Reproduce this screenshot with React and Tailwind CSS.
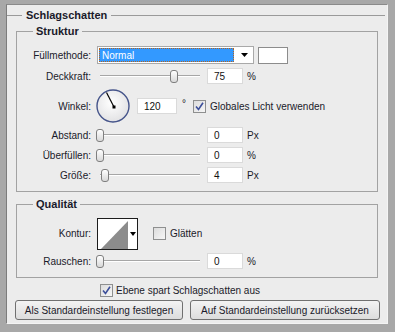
import React from 'react'

const font = "font-['Liberation_Sans','DejaVu_Sans',Arial,sans-serif]"

function Checkbox({ checked }) {
  return (
    <div className="flex h-[13px] w-[13px] items-center justify-center border border-[#8e8f8f] bg-gradient-to-br from-[#dcdcdc] to-[#f6f6f6]">
      {checked && (
        <svg width="9" height="9" viewBox="0 0 9 9">
          <path d="M1 4.5 L3.5 7.5 L8 0.8" fill="none" stroke="#3c4f9a" strokeWidth="1.6" />
        </svg>
      )}
    </div>
  )
}

function Slider({ thumb }) {
  return (
    <div className="relative flex h-[16px] w-[106px] items-center px-[3px]">
      <div className="h-[2px] w-full border-t border-b border-t-[#a6a6a6] border-b-white" />
      <div
        className="absolute top-[2px] h-[13px] w-[8px] rounded-[3px] border border-[#7f7f7f] bg-gradient-to-b from-white to-[#d8d8d8]"
        style={{ left: thumb - 4 }}
      />
    </div>
  )
}

function NumInput({ value, w = 'w-[36px]' }) {
  return (
    <div className={`${w} flex h-[16px] items-center border border-[#dadada] bg-white pl-[6px] text-[#111]`}>
      {value}
    </div>
  )
}

function Label({ children }) {
  return <div className="w-[75px] shrink-0 pr-[1px] text-right">{children}</div>
}

function SliderRow({ label, thumb, value, unit }) {
  return (
    <div className="flex h-[20px] items-center">
      <Label>{label}</Label>
      <div className="ml-[5px]">
        <Slider thumb={thumb} />
      </div>
      <div className="ml-[4px]">
        <NumInput value={value} />
      </div>
      <span className="ml-[4px]">{unit}</span>
    </div>
  )
}

function Dial() {
  return (
    <svg width="34" height="34" viewBox="0 0 34 34">
      <defs>
        <radialGradient id="dialFill" cx="45%" cy="40%" r="60%">
          <stop offset="0%" stopColor="#ffffff" />
          <stop offset="100%" stopColor="#e2e2e4" />
        </radialGradient>
      </defs>
      <circle cx="17" cy="17" r="16" fill="url(#dialFill)" stroke="#45548a" strokeWidth="1.4" />
      <line x1="18" y1="18" x2="10.5" y2="3.5" stroke="#000" strokeWidth="1.2" />
      <rect x="16.5" y="16.5" width="3" height="3" fill="#000" />
    </svg>
  )
}

function ContourPicker() {
  return (
    <div className="flex h-[32px] w-[41px] border border-[#1c1c1c] bg-white">
      <svg width="30" height="30" viewBox="0 0 30 30">
        <polygon points="3,30 30,2 30,30" fill="#8c8c8c" />
      </svg>
      <div className="flex flex-1 items-center justify-center">
        <svg width="6" height="4" viewBox="0 0 6 4">
          <polygon points="0,0 6,0 3,4" fill="#000" />
        </svg>
      </div>
    </div>
  )
}

export default function App() {
  return (
    <div className={`${font} h-[332px] w-[395px] bg-[#a8a8a8] pl-[6px] pr-[7px] pt-[4px] pb-[8px] text-[10px] text-[#1a1a2a]`}>
      <div className="flex h-full flex-col border-l border-t border-l-[#7c7c7c] border-t-[#8a8a8a] border-r border-b border-r-[#f4f4f4] border-b-[#f4f4f4] bg-[#ececec]">
        <div className="mt-[3px] mr-[2px] flex h-[14px] items-center">
          <div className="h-px w-[15px] bg-[#9a9a9a]" />
          <span className="px-[4px] text-[11px] font-bold">Schlagschatten</span>
          <div className="h-px flex-1 bg-[#9a9a9a]" />
        </div>

        <fieldset className="mx-[9px] mt-[3px] border border-[#a2a2a2] pt-[7px] pb-[6px]">
          <legend className="ml-[16px] px-[3px] text-[11px] leading-[13px] font-bold">Struktur</legend>

          <div className="flex h-[20px] items-center">
            <Label>Füllmethode:</Label>
            <div className="ml-[5px] flex h-[18px] w-[157px] border border-[#a9a9a9] bg-white">
              <div className="m-[1px] flex flex-1 items-center border border-dotted border-[#b8641c] bg-[#3399ff] pl-[2px] text-white">
                Normal
              </div>
              <div className="flex w-[18px] items-center justify-center">
                <svg width="7" height="4" viewBox="0 0 7 4">
                  <polygon points="0,0 7,0 3.5,4" fill="#000" />
                </svg>
              </div>
            </div>
            <div className="ml-[4px] h-[17px] w-[30px] border border-[#8c8c8c] bg-white" />
          </div>

          <div className="mt-[1px]">
            <SliderRow label="Deckkraft:" thumb={77} value="75" unit="%" />
          </div>

          <div className="mt-[2px] flex h-[36px] items-center">
            <Label>Winkel:</Label>
            <div className="ml-[4px] flex">
              <Dial />
            </div>
            <div className="ml-[7px]">
              <NumInput value="120" w="w-[40px]" />
            </div>
            <span className="ml-[5px] self-start pt-[8px]">°</span>
            <div className="ml-[7px]">
              <Checkbox checked />
            </div>
            <span className="ml-[4px]">Globales Licht verwenden</span>
          </div>

          <div className="mt-[1px]">
            <SliderRow label="Abstand:" thumb={3} value="0" unit="Px" />
          </div>
          <SliderRow label="Überfüllen:" thumb={3} value="0" unit="%" />
          <SliderRow label="Größe:" thumb={8} value="4" unit="Px" />
        </fieldset>

        <fieldset className="mx-[9px] mt-[6px] border border-[#a2a2a2] pt-[6px] pb-[6px]">
          <legend className="ml-[16px] px-[3px] text-[11px] leading-[13px] font-bold">Qualität</legend>

          <div className="flex h-[33px] items-center">
            <Label>Kontur:</Label>
            <div className="ml-[5px]">
              <ContourPicker />
            </div>
            <div className="ml-[15px]">
              <Checkbox />
            </div>
            <span className="ml-[4px]">Glätten</span>
          </div>

          <div className="mt-[1px]">
            <SliderRow label="Rauschen:" thumb={3} value="0" unit="%" />
          </div>
        </fieldset>

        <div className="mt-[5px] flex h-[14px] items-center pl-[93px]">
          <Checkbox checked />
          <span className="ml-[3px]">Ebene spart Schlagschatten aus</span>
        </div>

        <div className="mt-[3px] flex gap-[7px] pl-[8px]">
          <button className="h-[20px] w-[168px] rounded-[3px] border border-[#707070] bg-gradient-to-b from-[#f3f3f3] to-[#dcdcdc] text-[10px] text-[#1a1a2a]">
            Als Standardeinstellung festlegen
          </button>
          <button className="h-[20px] w-[190px] rounded-[3px] border border-[#707070] bg-gradient-to-b from-[#f3f3f3] to-[#dcdcdc] text-[10px] text-[#1a1a2a]">
            Auf Standardeinstellung zurücksetzen
          </button>
        </div>
      </div>
    </div>
  )
}
